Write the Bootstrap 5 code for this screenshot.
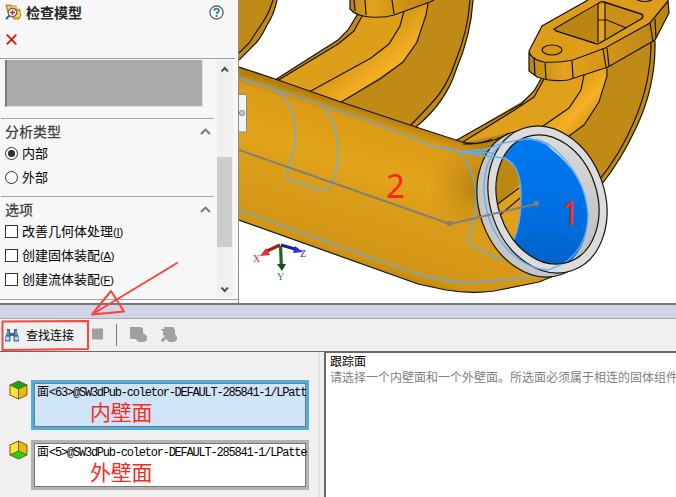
<!DOCTYPE html>
<html lang="zh-CN">
<head>
<meta charset="utf-8">
<title>检查模型</title>
<link rel="stylesheet" href="https://cdn.jsdelivr.net/npm/bootstrap@5.3.0/dist/css/bootstrap.min.css">
<style>
body{width:676px;height:497px;overflow:hidden;background:#f0f0f0;color:#000;font:13px/18px "Noto Sans CJK SC",sans-serif}
svg{display:block;flex:none}
.work{height:303px}
.side{width:239px;background:#f7f7f7;border-right:1px solid #8b8b8b}
.side-title{height:24px;padding:0 14px 0 5px;font-size:14px;font-weight:600;color:#262626}
.side-title span{margin-left:4px;padding-bottom:1px}
.side-cancel{height:34px;padding:10px 0 0 6px}
.side-body{height:239px;border-top:1px solid #a0a0a0;margin-right:3px}
.opts{width:214px;padding-left:1px}
.preview{width:198px;height:47px;margin:1px 0 11px 4px;background:#ababab;border:1px solid #e3e3e3;border-left:2px solid #777;border-top:0}
.rule{height:1px;background:#a5a5a5}
.group-title{height:22px;padding:4px 3px 2px 4px;font-size:14px;font-weight:500;color:#444}
.opt{height:24px;padding-left:4px;gap:4px;font-size:13px}
.opt .form-check-input{width:13px;height:13px;margin:0;border:1px solid #333;border-radius:0;background-color:#fff;flex:none}
.opt .form-check-input[type=radio]{border-radius:50%}
.opt .form-check-input:checked{background:radial-gradient(circle,#333 0 3.3px,#fff 4px)}
.opt-last{margin-bottom:7px}
.key{font:11px "Liberation Sans",sans-serif;letter-spacing:-.1px}
.scroller{width:16px;margin:1px 0 0 3px;background:#f0f0f0}
.thumb{height:91px;width:15px;background:#cdcdcd}
.side-foot{height:5px;padding-top:2px}
.splitter{height:16px;background:#d0d4e6;border-top:2px solid #777;border-bottom:1px solid #aaa}
.tools{height:33px;padding-left:4px;border-bottom:1px solid #696969;background:#f0f0f0;gap:18px}
.tools button{font-size:12px;line-height:18px;border:0;border-radius:0;color:#000;gap:6px}
.picks{width:320px;height:145px;padding:28px 0 0 9px;border-right:2px solid #e0e0e0}
.pick{gap:3px;height:50px;margin-bottom:10px}
.pick-box{width:278px;height:50px;border:3px solid #b3b3b3;background:#fff}
.pick-in{height:44px;border:1px solid #777;padding-left:2px;white-space:nowrap;font:12px/14px "Liberation Mono",monospace;letter-spacing:-1.22px}
.pick-row{height:14px}
.han{font-family:"Noto Sans CJK SC",sans-serif;letter-spacing:0;line-height:14px}
.pick.on .pick-box{border-color:#4faee0;background:#d0e4f8}
.callout-red{font:21px/26px "Noto Sans CJK SC",sans-serif;color:#f42b22;letter-spacing:-.2px;padding-left:53px}
.hint{height:145px;margin-left:4px;background:#fff;border-left:2px solid #696969;border-top:1px solid #696969;font-size:12px;line-height:16px;white-space:nowrap;overflow:hidden;padding-left:4px}
.hint-text{color:#808080;height:15px}
.k{stroke:#16120a;stroke-width:1.2;fill:none}
.b{stroke:#5eaef2;stroke-width:1.3;fill:none}
.ink{left:0;top:255px;pointer-events:none}
</style>
<script src="https://cdn.jsdelivr.net/npm/bootstrap@5.3.0/dist/js/bootstrap.bundle.min.js"></script>
</head>
<body>
<div class="work d-flex">
  <aside class="side flex-shrink-0">
    <header class="side-title d-flex align-items-center">
      <svg width="17" height="17" viewBox="0 0 17 17"><path d="M1 1h5l1 1h4v3l4 1v3l1 2-2 4H9L3 9z" fill="#f0b91e" stroke="#8d6414" stroke-width=".8"/><path d="M4 2v3M7 3h4M10 12h4v-4" stroke="#fff39a" fill="none"/><circle cx="7.500" cy="8.500" r="4.200" fill="#e9f3fd" stroke="#668" stroke-width="1.200"/><path d="M7.500 6v5M5 8.500h5" stroke="#e02020" stroke-width="1.300"/><path d="M4.500 11.500L1 15" stroke="#235da5" stroke-width="2"/></svg>
      <span>检查模型</span>
      <svg class="ms-auto" width="15" height="15" viewBox="0 0 15 15"><circle cx="7.500" cy="7.500" r="6.600" fill="#fbfbfb" stroke="#4d5357" stroke-width="1.200"/><path d="M5.200 5.800C5.200 2.900 9.900 3 9.900 5.600c0 1.700-2.300 1.700-2.300 3.300M7.600 10.100v1.800" fill="none" stroke="#2d79b5" stroke-width="1.800"/></svg>
    </header>
    <div class="side-cancel"><svg width="11" height="11" viewBox="0 0 11 11"><path d="M.7.7l9.600 9.600M10.300.7L.7 10.300" stroke="#d81e05" stroke-width="1.900"/></svg></div>
    <div class="side-body d-flex">
      <div class="opts">
        <div class="preview"></div>
        <div class="rule"></div>
        <div class="group-title d-flex align-items-center justify-content-between">分析类型<svg width="11" height="7" viewBox="0 0 11 7"><path d="M1 6l4.500-4.500L10 6" fill="none" stroke="#777" stroke-width="1.900"/></svg></div>
        <label class="opt d-flex align-items-center"><input class="form-check-input" type="radio" name="kind" checked>内部</label>
        <label class="opt opt-last d-flex align-items-center"><input class="form-check-input" type="radio" name="kind">外部</label>
        <div class="rule"></div>
        <div class="group-title d-flex align-items-center justify-content-between">选项<svg width="11" height="7" viewBox="0 0 11 7"><path d="M1 6l4.500-4.500L10 6" fill="none" stroke="#777" stroke-width="1.900"/></svg></div>
        <label class="opt d-flex align-items-center"><input class="form-check-input" type="checkbox"><span>改善几何体处理<span class="key">(<u>I</u>)</span></span></label>
        <label class="opt d-flex align-items-center"><input class="form-check-input" type="checkbox"><span>创建固体装配<span class="key">(<u>A</u>)</span></span></label>
        <label class="opt d-flex align-items-center"><input class="form-check-input" type="checkbox"><span>创建流体装配<span class="key">(<u>F</u>)</span></span></label>
      </div>
      <div class="scroller d-flex flex-column">
        <svg width="16" height="97" viewBox="0 0 16 97"><path d="M4.500 11.500L7.700 8l3.200 3.500" fill="none" stroke="#505050" stroke-width="1.900"/></svg>
        <div class="thumb"></div>
        <svg width="16" height="50" viewBox="0 0 16 50"><path d="M4.500 40.500l3.200 3.500 3.200-3.500" fill="none" stroke="#505050" stroke-width="1.900"/></svg>
      </div>
    </div>
    <div class="side-foot"><div class="rule"></div></div>
  </aside>

  <svg width="437" height="303" viewBox="239 0 437 303">
    <defs>
      <linearGradient id="main" gradientUnits="userSpaceOnUse" x1="370" y1="112" x2="325" y2="258"><stop offset="0" stop-color="#b57f10"/><stop offset=".08" stop-color="#dc9b16"/><stop offset=".35" stop-color="#e2a41a"/><stop offset=".6" stop-color="#d99c19"/><stop offset=".92" stop-color="#d29516"/><stop offset="1" stop-color="#b98212"/></linearGradient>
      <radialGradient id="shade" gradientUnits="userSpaceOnUse" cx="478" cy="188" r="50"><stop offset="0" stop-color="#aa780f" stop-opacity=".8"/><stop offset="1" stop-color="#c08914" stop-opacity="0"/></radialGradient>
      <linearGradient id="elbow" gradientUnits="userSpaceOnUse" x1="380" y1="36" x2="412" y2="76"><stop offset="0" stop-color="#d99a16"/><stop offset=".6" stop-color="#f4b026"/><stop offset="1" stop-color="#d39314"/></linearGradient>
      <linearGradient id="elbow2" gradientUnits="userSpaceOnUse" x1="568" y1="92" x2="598" y2="120"><stop offset="0" stop-color="#e09f18"/><stop offset=".5" stop-color="#f4b026"/><stop offset="1" stop-color="#d39314"/></linearGradient>
      <linearGradient id="lip" x1="0" y1="0" x2="1" y2="0"><stop offset="0" stop-color="#bd8613"/><stop offset=".25" stop-color="#e5a31c"/><stop offset="1" stop-color="#b98212"/></linearGradient>
      <linearGradient id="blue" x1="0" y1="0" x2="0" y2="1"><stop offset="0" stop-color="#007aef"/><stop offset=".5" stop-color="#0071e5"/><stop offset="1" stop-color="#0062c8"/></linearGradient>
      <linearGradient id="steel" x1="0" y1="0" x2="0" y2="1"><stop offset="0" stop-color="#dcdcdc"/><stop offset="1" stop-color="#b9b9b9"/></linearGradient>
      <clipPath id="hole"><ellipse cx="547.500" cy="199.500" rx="49.600" ry="66" transform="rotate(-18.500 547.500 199.500)"/></clipPath>
    </defs>
    <rect x="239" width="437" height="303" fill="#fff"/>
    <path d="M239 0h38q-3 15-10 25-5 11-11 18l-17 17z" fill="#c08a16"/><path class="k" d="M277 0q-3 15-10 25-5 11-11 18l-17 17M273 0q-4 13-10 22l-14 21-10 10"/>
    <!-- middle branch -->
    <path d="M359 10l-11 20-10 10-63 40 141 47q30-25 40-57 15-35 17-70H350z" fill="#c08a16"/>
    <path d="M362 13l-8 18-16 13-61 37 32 11 62-34 18-14 11-18 3-14z" fill="#dd9f1a"/>
    <path d="M309 92l62-34 18-14 11-18 3-14 25-10-2 15-9 25-14 20-62 40z" fill="url(#elbow)"/>
    <path class="k" d="M359 12l-11 18-10 10-63 40M362 16l-8 15-16 13-61 37M404 11l-4 15-11 18-18 14-62 34M428 3l-2 12-9 27-14 20-23 17-39 23M473 0q-2 35-17 70-10 32-40 57M470 0q-2 30-14 60-9 28-26 45l-20 21"/>
    <path d="M350 0v9q6 7 20 8 14 1 24-2l36-13 4-2z" fill="url(#lip)"/><path class="k" d="M350 0v9q6 7 20 8 14 1 24-2l36-13 4-2M354 0l1 11M365 0l1 15M392 0l2 14"/>
    <!-- right branch -->
    <path d="M541 77q-6 18-20 25l-66 39 30 50 117-7q19-24 34-56 20-42 19-87z" fill="#c08a16"/>
    <path d="M544 79l-10 16-18 14-55 34 82-17 26-18 12-18 3-17z" fill="#dfa11b"/>
    <path d="M543 126l26-18 12-18 3-15 24-8-1 10-7 25-16 24-15 11z" fill="url(#elbow2)"/>
    <path class="k" d="M541 79l-7 12-13 13-66 37M544 79l-10 18-18 12-53 33M584 75l-3 15-12 18-26 18M607 67v9l-8 26-15 23-15 11M655 41q1 45-19 87-15 32-34 56M651 42q0 42-18 82-13 30-33 55"/>
    <path d="M529 52v19l8 6q14 5 31 3l40-13 47-27 14-27-1-13h-60z" fill="url(#lip)"/>
    <path d="M529 51l13-25 46-26h80v2l-18 21-45 25-32 12q-15 3-29 2-14-3-15-11z" fill="#dc9d18"/>
    <path class="k" d="M588 0l-46 26-13 25q1 8 15 11 14 1 29-2l32-12 45-25 18-22M529 52v19l8 6q14 5 31 3l40-13 47-27 14-27-1-13M534 57l1 19M545 62l1 17M572 61l1 17M603 49l3 18M607 48l2 18M650 23l3 19M655 19l1 20"/>
    <path d="M554 29l45-26q2-2 5-1l37 12q4 2 0 5l-41 24q-3 2-6 0l-38-12z" fill="#cb9015" stroke="#16120a" stroke-width="1.400"/><path d="M556 29l42-25v39l-39-12z" fill="#bb8513"/><path d="M598 4h7v34l-7 4z" fill="#e6a31c"/><path class="k" d="M598 3v39M605 3v36M598 20h9l19 8"/>
    <ellipse cx="552" cy="50" rx="10" ry="5" fill="#d69717" stroke="#16120a" stroke-width="1.200"/><path class="k" d="M637 0q8 3 15 0"/>
    <!-- main pipe -->
    <path d="M239 67l36 12 66 23 75 25 46 15q20 1 35-6l10-3 48 143-16 6-45 9q-23 4-48-1l-28-6-179-64z" fill="url(#main)"/>
    <path d="M425 130l37 13 40-7 10 100-80-8z" fill="url(#shade)"/>
    <path class="k" d="M239 67l36 12 66 23 75 25 46 15q14 4 30-3M463 144q30 0 46-11M239 220l179 64 28 6q25 4 48 1l45-9 22-9"/>
    <path class="b" d="M239 78l83 27 41 14 70 27 30 6 30-4M275 90q23 16 20 51-2 15-7 25-2 11 1 14l34 11q12-4 15-32 1-37-16-52M239 210l155 56 35 11 35 6 50-4q34-6 63-16M457 152q15 11 18 35 3 25-5 45-3 10 1 13 20 9 27 15 14-5 18-30"/>
    <!-- flange ring -->
    <g transform="translate(-11 4) rotate(-19.200 547.500 199.500)"><ellipse cx="547.500" cy="199.500" rx="57.300" ry="75.200" fill="#c6c6c6" stroke="#16120a" stroke-width="1.200"/></g>
    <g transform="rotate(-19.200 547.500 199.500)"><ellipse cx="547.500" cy="199.500" rx="57.300" ry="75.200" fill="#dcdcdc" stroke="#16120a" stroke-width="1.200"/></g>
    <g clip-path="url(#hole)">
      <rect x="485" y="125" width="125" height="150" fill="url(#steel)"/>
      <path d="M490 140l16 17q15 9 15 37 1 28-8 48l-23-7z" fill="#bd8713"/><path d="M495 208l26-25v37l-20 10z" fill="#dfa11b"/><path d="M500 215l22-7-2 25-7 9z" fill="#dfa11b"/><path class="k" d="M495 206l24-18M500 215l20-17"/>
      <path d="M490 150l15 8q16 8 16 36 1 28-8 48l10 24 40 1q25-17 25-52-3-40-36-65-9-11-25-12-20 2-27 12z" fill="url(#blue)"/>
      <path class="b" d="M505 158q16 8 16 36 1 28-8 48M563 264q25-17 25-50-3-40-36-67-9-8-25-8"/>
    </g>
    <ellipse cx="547.500" cy="199.500" rx="49.600" ry="66" transform="rotate(-18.500 547.500 199.500)" class="k"/>
    <path class="b" d="M440 147l35 8 30 3 9 7M475 154l28-11 22-4q12 0 20 5M503 143q-20 15-19 50 3 35 24 57 17 18 40 20l15-6M466 153l27 0"/>
    <path d="M239 150l211 74 86-20" fill="none" stroke="#7d7d7d" stroke-width="1.900"/><circle cx="449.500" cy="223.500" r="2.700" fill="#7d7d7d"/><circle cx="536.500" cy="203.500" r="2.700" fill="#7d7d7d"/>
    <g fill="#fb2413" font-family="Noto Sans,sans-serif" font-size="33"><text x="386" y="198">2</text><text x="561" y="225">1</text></g>
    <!-- axes -->
    <path d="M280 245l-13 6" stroke="#a81c1c" stroke-width="3.200"/><path d="M260 256l6-8 4 7z" fill="#e33126"/><path d="M281 245l14 4" stroke="#181f9e" stroke-width="3.200"/><path d="M303 252l-8-6-2 7z" fill="#2631de"/><path d="M280.500 246l.8 19" stroke="#176b1c" stroke-width="3.200"/><path d="M277 264h9l-4 7z" fill="#164d1d"/>
    <g font-family="Liberation Serif,serif" font-size="10"><text x="253" y="262" fill="#e22">X</text><text x="300" y="257" fill="#22d">Z</text><text x="277" y="280" fill="#18801c">Y</text></g>
    <path d="M239 94.500h7.500v37.500H239" fill="#f5f5f5" stroke="#8b8b8b"/><circle cx="242" cy="113" r="2.600" fill="#ccc" stroke="#8b8b8b"/>
  </svg>
</div>
<div class="splitter"></div>
<div class="tools d-flex align-items-center">
  <button class="btn p-0 d-flex align-items-center"><svg width="16" height="14" viewBox="0 0 16 14"><path d="M3 1h3v3l1 1h2l1-1V1h3v3l2 6v3.500H9.500V8h-3v5.500H1V10l2-6z" fill="#3e6b96"/><path d="M2 9h3v3H2zM11 9h3v3h-3zM4 3v4M12 3v4" fill="#c8def1" stroke="#a8c8e4" stroke-width=".8"/></svg>查找连接</button>
  <svg width="94" height="24" viewBox="0 0 94 24"><path fill="#a0a0a0" d="M0 5.500h11v11H0zM38 4h11l2 2v4l4 3v4l-3 2h-5l-4-3h-4l-1-1zM72 4h9l2 3v4l2 3v3l-3 2h-5l-3-3-3 3-2-1v-1l4-4-2-1V8l-2-1V6h3z"/><path d="M24.500 1v22" stroke="#777"/></svg>
</div>
<div class="d-flex">
  <section class="picks flex-shrink-0">
    <div class="pick on d-flex">
      <svg width="19" height="20" viewBox="0 0 19 20"><path d="M1 5v10l8.500 4V9z" fill="#ffe32c"/><path d="M18 5v10l-8.500 4V9z" fill="#e7bd0c"/><path d="M1 5l8.500-4L18 5 9.500 9z" fill="#15a51d"/><path d="M1 5l8.500-4L18 5v10l-8.500 4L1 15zM1 5l8.500 4L18 5M9.500 9v10" fill="none" stroke="#745c08"/></svg>
      <div class="pick-box"><div class="pick-in"><div class="pick-row"><span class="han">面</span>&lt;63&gt;@SW3dPub-coletor-DEFAULT-285841-1/LPatt</div><div class="callout-red">内壁面</div></div></div>
    </div>
    <div class="pick d-flex">
      <svg width="19" height="20" viewBox="0 0 19 20"><path d="M1 5v10l8.500-4V1z" fill="#ffe32c"/><path d="M18 5v10l-8.500-4V1z" fill="#e7bd0c"/><path d="M1 15l8.500-4 8.500 4-8.500 4z" fill="#15d51d"/><path d="M1 5l8.500-4L18 5v10l-8.500 4L1 15zM1 15l8.500-4 8.500 4M9.500 1v10" fill="none" stroke="#745c08"/></svg>
      <div class="pick-box"><div class="pick-in"><div class="pick-row"><span class="han">面</span>&lt;5&gt;@SW3dPub-coletor-DEFAULT-285841-1/LPatte</div><div class="callout-red">外壁面</div></div></div>
    </div>
  </section>
  <section class="hint flex-grow-1">
    <div>跟踪面</div>
    <div class="hint-text">请选择一个内壁面和一个外壁面。所选面必须属于相连的固体组件</div>
  </section>
</div>
<svg class="ink position-absolute" width="190" height="100" viewBox="0 255 190 100"><g fill="none" stroke="#fa433b" stroke-width="2" stroke-linejoin="round" stroke-linecap="round"><path d="M177 263L92 314.500M92 314.500L111 291l13 20.500z"/><path d="M2.500 321.500l85.500-.5v28l-85.500 1z"/></g></svg>
</body>
</html>
